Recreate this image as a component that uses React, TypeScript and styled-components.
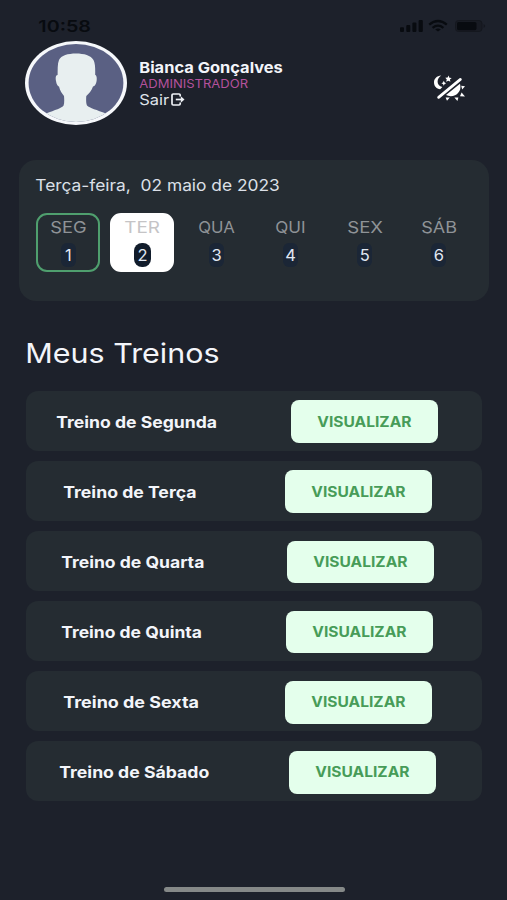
import React, { useLayoutEffect, useRef, useState } from "react";
import styled, { createGlobalStyle } from "styled-components";

const GlobalStyle = createGlobalStyle`
  * { box-sizing: border-box; }
  body { margin: 0; background: #1d212b; }
`;

const Screen = styled.div`
  width: 507px;
  height: 900px;
  overflow: hidden;
  display: flex;
  flex-direction: column;
  background: #1d212b;
  color: #f3f5fa;
  font-family: Inter, "Noto Sans", sans-serif;
`;

const StatusBar = styled.header`
  display: flex;
  justify-content: space-between;
  align-items: center;
  height: 40px;
  padding: 12px 20px 0 38.5px;
  color: #080b10;
`;

const Profile = styled.section`
  display: flex;
  align-items: flex-start;
  height: 120px;
  padding: 0 40px 0 25px;
`;

const ProfileInfo = styled.div`
  display: flex;
  flex-direction: column;
  padding: 19.7px 0 0 12.8px;
`;

const ThemeButton = styled.button`
  margin: 33px 0 0 auto;
  padding: 0;
  border: 0;
  background: none;
  line-height: 0;
`;

const Line = styled.div`
  display: flex;
  align-items: center;
  height: 16px;
  gap: 3px;
`;

const FitBox = styled.span<{ $width: number }>`
  display: block;
  flex: none;
  width: ${(p) => p.$width}px;
  height: 16px;
  font-size: 12px;
  line-height: 16px;
  text-align: left;
`;

const FitText = styled.span<{ $size: number; $weight: number; $color: string }>`
  display: inline-block;
  vertical-align: top;
  transform-origin: 0 50%;
  white-space: pre;
  line-height: 16px;
  font-size: ${(p) => p.$size}px;
  font-weight: ${(p) => p.$weight};
  color: ${(p) => p.$color};
`;

type TextProps = {
  children: string;
  width: number;
  size: number;
  weight?: number;
  color?: string;
};

/** A single line of text widened to a given width. */
function Text({ children, width, size, weight = 400, color = "#f3f5fa" }: TextProps) {
  const ref = useRef<HTMLSpanElement>(null);
  const [scale, setScale] = useState(1);
  useLayoutEffect(() => {
    if (ref.current) setScale((width + 1.5) / ref.current.offsetWidth);
  }, [width]);
  return (
    <FitBox $width={width}>
      <FitText
        ref={ref}
        $size={size}
        $weight={weight}
        $color={color}
        style={{ transform: `translateX(-0.7px) scaleX(${scale})` }}
      >
        {children}
      </FitText>
    </FitBox>
  );
}

const Calendar = styled.section`
  width: 469.5px;
  height: 141px;
  margin-left: 19.2px;
  padding: 17px 0 0 16.5px;
  border-radius: 17px;
  background: #252c32;
`;

const Days = styled.div`
  display: flex;
  gap: 10.1px;
  margin: 19.5px 0 0 0.7px;
`;

type DayState = "outlined" | "selected" | "plain";

const Day = styled.div<{ $state: DayState }>`
  display: flex;
  flex-direction: column;
  align-items: center;
  width: 64px;
  height: 59px;
  padding-top: 4px;
  border-radius: 11px;
  border: 2px solid ${(p) => (p.$state === "outlined" ? "#4f9f6e" : p.$state === "selected" ? "#fff" : "transparent")};
  background: ${(p) => (p.$state === "selected" ? "#fff" : "transparent")};
`;

const DayNumber = styled.span<{ $strong: boolean }>`
  width: ${(p) => (p.$strong ? 17 : 15)}px;
  height: 24px;
  margin-top: 8.5px;
  border-radius: ${(p) => (p.$strong ? 8 : 6)}px;
  background: ${(p) => (p.$strong ? "#111c2b" : "#1b2636")};
  display: flex;
  align-items: center;
  justify-content: center;
  font-size: 16.5px;
  line-height: 24px;
  color: #e2e8f2;
`;

const Title = styled.h1`
  display: flex;
  align-items: center;
  height: 36px;
  margin: 35px 0 0 26px;
`;

const Workouts = styled.ul`
  display: flex;
  flex-direction: column;
  gap: 10.2px;
  list-style: none;
  margin: 18.5px 0 0 26px;
  padding: 0;
  width: 456px;
`;

const Workout = styled.li`
  display: flex;
  align-items: center;
  justify-content: space-around;
  height: 60px;
  padding-top: 2px;
  border-radius: 12px;
  background: #252c32;
`;

const Name = styled.div`
  margin-right: 12.5px;
`;

const ViewButton = styled.button`
  display: flex;
  align-items: center;
  justify-content: center;
  width: 147px;
  height: 42.5px;
  margin-right: 12.5px;
  padding: 0;
  border: 0;
  border-radius: 8px;
  background: #e4ffec;
  font-family: inherit;
`;

const HomeIndicator = styled.div`
  width: 181px;
  height: 5px;
  margin: auto 0 8px 163.5px;
  flex: none;
  border-radius: 3px;
  background: #858988;
`;

const StatusIcons = () => (
  <svg width="88" height="16" viewBox="399 18 88 16" fill="#080b10">
    <rect x="400" y="27.3" width="4" height="4.7" rx="1" />
    <rect x="406.3" y="25" width="4" height="7" rx="1" />
    <rect x="412.4" y="22.6" width="4" height="9.4" rx="1" />
    <rect x="418.6" y="20" width="4.2" height="12" rx="1" />
    <g fill="none" stroke="#080b10" strokeWidth="2.3">
      <path d="M429.2 24.6Q438 17.4 446.8 24.6" />
      <path d="M432.6 27.8Q438 23.4 443.4 27.8" />
    </g>
    <path d="M435.2 29.6Q438 27.4 440.8 29.6L438 31.6Z" />
    <rect x="455.5" y="20.5" width="26.5" height="11" rx="3" fill="#181b23" stroke="#14171e" />
    <rect x="457" y="22" width="19.5" height="8.2" rx="1.6" />
    <path d="M483.6 24Q486.6 26 483.6 28Z" fill="#14171e" />
  </svg>
);

const AvatarDrawing = styled.svg`
  flex: none;
  margin-top: 1px;
`;

const Avatar = () => (
  <AvatarDrawing width="102" height="84" viewBox="0 0 102 84">
    <defs>
      <clipPath id="face">
        <ellipse cx="51" cy="42" rx="47.4" ry="39" />
      </clipPath>
    </defs>
    <ellipse cx="51" cy="42" rx="51" ry="42" fill="#f6f8fb" />
    <g clipPath="url(#face)">
      <rect width="102" height="84" fill="#5a6083" />
      <path
        fill="#e8eff0"
        d="M51 12.5C43 12.5 36 14.5 34 19C32.3 23 32.8 29 32.6 34C30.5 34 30.4 37 31 40C31.5 43.5 32.6 45 34 45.4C35 49.5 37 52.5 39 55C39.3 58.5 39.4 62 38.6 64.5C37 67 30 69 21 72.5L18 84H84L81 72.5C72 69 64.5 67 62 64.5C61 62 61 58.5 61.3 55C64 52.5 66.5 49.5 68 45.4C70 45 71 43.5 71.6 40C72 37 71.6 34 70.2 34C70.2 29 70.5 23 68.5 19C66 14.5 59 12.5 51 12.5Z"
      />
    </g>
  </AvatarDrawing>
);

const ExitIcon = () => (
  <svg width="14" height="13" viewBox="0 0 14 13" fill="none" stroke="#eef1f6" strokeWidth="1.7">
    <path d="M9.2 3.6V2.2Q9.2 1 8 1H2.2Q1 1 1 2.2V10.8Q1 12 2.2 12H8Q9.2 12 9.2 10.8V9.4" />
    <path d="M4.8 6.5H11.2" />
    <path d="M9.8 3.3L13.5 6.5L9.8 9.7Z" fill="#eef1f6" stroke="none" />
  </svg>
);

const ThemeIcon = () => (
  <svg width="34" height="30" viewBox="433 73 34 30" fill="#fff">
    <path d="M441.2 75.6C436.8 75.8 434 79 434 82.4C434 86 436.6 88.8 440.2 89.2L442.4 86.9C439.2 86.4 437.6 84.4 437.6 81.8C437.6 79.2 439 77 441.2 75.6Z" />
    <path d="M448.6 75.4L449.4 77.7L451.7 78.1L449.9 79.5L450.4 81.8L448.4 80.7L446.1 81.7L446.8 79.4L445.3 77.7L447.6 77.6Z" />
    <path d="M443.8 80.7L444.6 82.4L446.2 83.2L444.6 84L443.8 85.7L443 84L441.4 83.2L443 82.4Z" />
    <path d="M438.6 97.4L460.4 79.4" stroke="#fff" strokeWidth="2.7" strokeLinecap="round" />
    <path d="M446 95L460 83.8C461.4 89 459.2 93.3 455 95.3C452 96.6 448.5 96.4 446 95Z" />
    <path d="M461.2 85.8L465 86.2L462.2 89.4ZM461.6 92.6L465 96.6L460 96.2ZM454.4 97.4L458.4 97.4L457.4 101ZM445.6 97.4L449.8 97.4L447 100.8Z" />
  </svg>
);

const days: { label: string; width: number; state: DayState }[] = [
  { label: "SEG", width: 35, state: "outlined" },
  { label: "TER", width: 34, state: "selected" },
  { label: "QUA", width: 35, state: "plain" },
  { label: "QUI", width: 28.5, state: "plain" },
  { label: "SEX", width: 34.5, state: "plain" },
  { label: "SÁB", width: 34.5, state: "plain" },
];

const workouts = [
  { name: "Treino de Segunda", width: 159 },
  { name: "Treino de Terça", width: 132 },
  { name: "Treino de Quarta", width: 141 },
  { name: "Treino de Quinta", width: 139.5 },
  { name: "Treino de Sexta", width: 134 },
  { name: "Treino de Sábado", width: 148.5 },
];

export default function App() {
  return (
    <>
      <GlobalStyle />
      <Screen>
        <StatusBar>
          <Text width={51.5} size={16} weight={600} color="#080b10">10:58</Text>
          <StatusIcons />
        </StatusBar>
        <Profile>
          <Avatar />
          <ProfileInfo>
            <Line><Text width={142} size={15} weight={700}>Bianca Gonçalves</Text></Line>
            <Line><Text width={107.5} size={12.3} color="#b4519c">ADMINISTRADOR</Text></Line>
            <Line>
              <Text width={28} size={14.5} color="#dfe3ea">Sair</Text>
              <ExitIcon />
            </Line>
          </ProfileInfo>
          <ThemeButton aria-label="Alternar tema"><ThemeIcon /></ThemeButton>
        </Profile>
        <Calendar>
          <Text width={243.5} size={16} color="#dce0e8">{"Terça-feira,  02 maio de 2023"}</Text>
          <Days>
            {days.map((d, i) => (
              <Day key={d.label} $state={d.state}>
                <Text width={d.width} size={16.5} color={d.state === "selected" ? "#c5c4c6" : "#8f9397"}>
                  {d.label}
                </Text>
                <DayNumber $strong={d.state === "selected"}>{i + 1}</DayNumber>
              </Day>
            ))}
          </Days>
        </Calendar>
        <Title><Text width={192.5} size={27}>Meus Treinos</Text></Title>
        <Workouts>
          {workouts.map((w) => (
            <Workout key={w.name}>
              <Name><Text width={w.width} size={16} weight={700}>{w.name}</Text></Name>
              <ViewButton>
                <Text width={93} size={14} weight={700} color="#479c58">VISUALIZAR</Text>
              </ViewButton>
            </Workout>
          ))}
        </Workouts>
        <HomeIndicator />
      </Screen>
    </>
  );
}
